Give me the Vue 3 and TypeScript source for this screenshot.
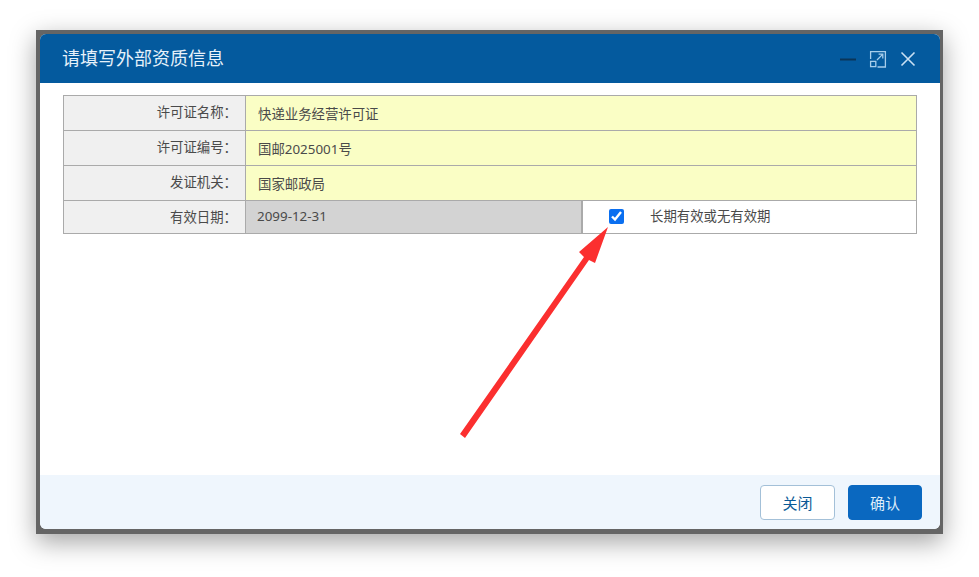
<template>
  <div class="page">
    <div class="dialog-frame">
      <div class="dialog">
        <header class="dialog__header">
          <h1 class="dialog__title">请填写外部资质信息</h1>
          <div class="dialog__tools">
            <svg class="tool" width="18" height="18" viewBox="0 0 18 18">
              <path d="M1 9.5h16" stroke="#0a3558" stroke-width="2" fill="none" />
            </svg>
            <svg class="tool" width="18" height="18" viewBox="0 0 18 18" fill="none" stroke="#a6cdeb" stroke-width="1.3">
              <path d="M7 1.6h9.4V17H8.5" />
              <path d="M1.6 9V1.6H7" />
              <rect x="1.6" y="11.4" width="5.2" height="5.2" />
              <path d="M8 10l5.6-5.6M9.6 4.2h4.2v4.2" />
            </svg>
            <svg class="tool" width="18" height="18" viewBox="0 0 18 18">
              <path d="M2.5 2.5l13 13M15.5 2.5l-13 13" stroke="#c9e0f3" stroke-width="1.6" fill="none" />
            </svg>
          </div>
        </header>

        <main class="dialog__body">
          <div class="form">
            <div v-for="row in rows" :key="row.label" class="form__row">
              <div class="form__label">{{ row.label }}</div>
              <div class="form__value">{{ row.value }}</div>
            </div>
            <div class="form__row form__row--date">
              <div class="form__label">有效日期：</div>
              <div class="form__value form__value--disabled">2099-12-31</div>
              <label class="form__check">
                <input v-model="longTerm" type="checkbox" />
                <span>长期有效或无有效期</span>
              </label>
            </div>
          </div>
        </main>

        <footer class="dialog__footer">
          <button class="btn" type="button">关闭</button>
          <button class="btn btn--primary" type="button">确认</button>
        </footer>
      </div>
    </div>

    <!-- Red annotation arrow drawn over the dialog -->
    <svg class="arrow" width="979" height="577" viewBox="0 0 979 577">
      <polygon points="460,434 465,438 589,260 595,263 608,227 579,252 584,257" fill="#fb2f2f" />
    </svg>
  </div>
</template>

<script setup lang="ts">
import { ref } from 'vue'

const longTerm = ref(true)

const rows = [
  { label: '许可证名称：', value: '快递业务经营许可证' },
  { label: '许可证编号：', value: '国邮2025001号' },
  { label: '发证机关：', value: '国家邮政局' },
]
</script>

<style>
html,
body {
  margin: 0;
  background: #fff;
}
</style>

<style scoped>
.page {
  position: relative;
  width: 979px;
  height: 577px;
  overflow: hidden;
  padding: 30px 0 0 36px;
  box-sizing: border-box;
  background: #fff;
  font-family: "Noto Sans", "Noto Sans CJK SC", sans-serif;
}

.dialog-frame {
  width: 907px;
  height: 504px;
  box-sizing: border-box;
  padding: 4px 3px 5px 4px;
  background: #656565;
  box-shadow: 0 8px 24px rgba(0, 0, 0, 0.36);
}

.dialog {
  display: flex;
  flex-direction: column;
  height: 100%;
  background: #fff;
  border-radius: 6px;
  overflow: hidden;
}

.dialog__header {
  display: flex;
  align-items: center;
  justify-content: space-between;
  flex: none;
  height: 49px;
  padding: 0 23px 0 23px;
  background: #045a9e;
}

.dialog__title {
  margin: -4px 0 0 -1px;
  font-size: 18px;
  font-weight: 400;
  color: #e6f1fa;
}

.dialog__tools {
  display: flex;
  align-items: center;
  gap: 12px;
}

.tool {
  display: block;
}

.dialog__body {
  flex: 1;
  padding: 12px 23px 0;
}

.form {
  width: 854px;
  font-size: 13.4px;
  color: #4a4a4a;
}

.form__row {
  display: grid;
  grid-template-columns: 182px 1fr;
  height: 35px;
  box-sizing: border-box;
  border: 1px solid #aaa;
  border-bottom: none;
}

.form__row--date {
  grid-template-columns: 182px 337px 1fr;
  margin-top: -1px;
  border-top: 2px solid #aaa;
  border-bottom: 1px solid #aaa;
}

.form__label {
  display: flex;
  align-items: center;
  justify-content: flex-end;
  padding-right: 8px;
  padding-bottom: 4px;
  background: #f0f0f0;
  border-right: 1px solid #aaa;
}

.form__row--date .form__label {
  padding-bottom: 2px;
}

.form__value {
  display: flex;
  align-items: center;
  padding-left: 12px;
  background: #fafec5;
}

.form__value--disabled {
  padding-bottom: 2px;
  padding-left: 11px;
  background: #d3d3d3;
  border-right: 2px solid #aaa;
}

.form__check {
  display: flex;
  align-items: center;
  background: #fff;
  padding-left: 26px;
  padding-bottom: 2px;
  color: #4a4a4a;
}

.form__check input {
  width: 15px;
  height: 15px;
  margin: 0 26px 0 0;
  accent-color: #0a6ff0;
}

.form__check span {
  margin-bottom: 2px;
}

.dialog__footer {
  display: flex;
  justify-content: flex-end;
  align-items: flex-start;
  gap: 13px;
  flex: none;
  height: 54px;
  box-sizing: border-box;
  padding: 10px 18px 0 0;
  background: #eff6fd;
}

.btn {
  width: 75px;
  height: 35px;
  padding: 0;
  border: 1px solid #a3c0d8;
  border-radius: 4px;
  background: #fff;
  color: #0a5a96;
  font-family: inherit;
  font-size: 15px;
}

.btn--primary {
  width: 74px;
  border-color: #0a68c0;
  background: #0a68c0;
  color: #dcecfa;
}

.arrow {
  position: absolute;
  left: 0;
  top: 0;
  pointer-events: none;
}
</style>
